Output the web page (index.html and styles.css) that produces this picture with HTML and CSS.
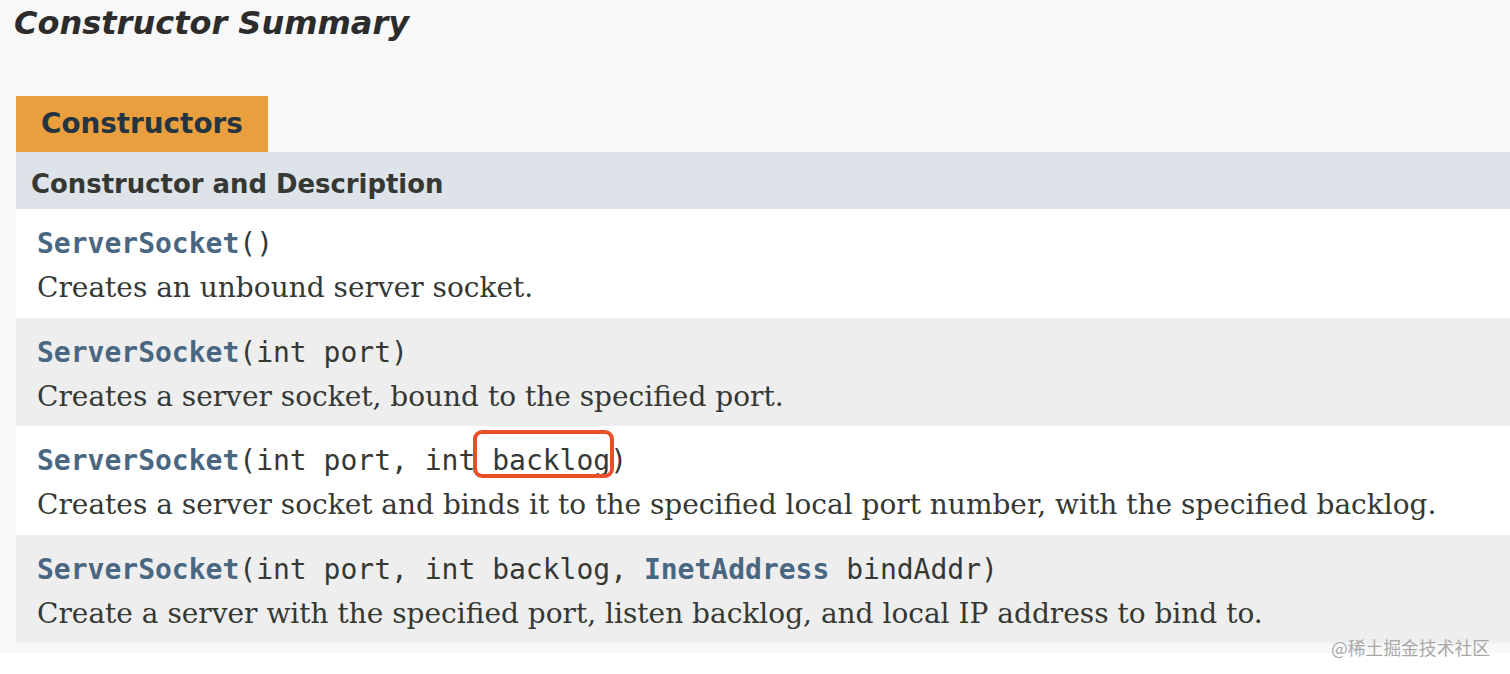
FILE: index.html
```html
<!DOCTYPE html>
<html>
<head>
<meta charset="utf-8">
<link rel="stylesheet" href="styles.css">
</head>
<body>
<div class="page">
  <h3 class="title">Constructor Summary</h3>
  <div class="summary">
    <div class="tab">Constructors</div>
    <div class="table">
      <div class="thead">Constructor and Description</div>
      <div class="row alt-white">
        <div class="code"><span class="name">ServerSocket</span>()</div>
        <div class="desc">Creates an unbound server socket.</div>
      </div>
      <div class="row alt-gray">
        <div class="code"><span class="name">ServerSocket</span>(int&nbsp;port)</div>
        <div class="desc">Creates a server socket, bound to the specified port.</div>
      </div>
      <div class="row alt-white">
        <div class="code"><span class="name">ServerSocket</span>(int&nbsp;port, int&nbsp;<span class="mark">backlog</span>)</div>
        <div class="desc">Creates a server socket and binds it to the specified local port number, with the specified backlog.</div>
      </div>
      <div class="row alt-gray">
        <div class="code"><span class="name">ServerSocket</span>(int&nbsp;port, int&nbsp;backlog, <span class="name">InetAddress</span>&nbsp;bindAddr)</div>
        <div class="desc">Create a server with the specified port, listen backlog, and local IP address to bind to.</div>
      </div>
    </div>
  </div>
  <div class="gap"></div>
  <div class="footer"></div>
  <div class="watermark">@稀土掘金技术社区</div>
</div>
</body>
</html>
```
FILE: styles.css
```css
html, body {
  margin: 0;
  padding: 0;
}
body {
  background: #f8f8f8;
  color: #353833;
  font-family: "DejaVu Sans", sans-serif;
  overflow: hidden;
}
.page {
  position: relative;
  height: 674px;
}
.title {
  margin: 0;
  padding: 0 0 0 14px;
  height: 46px;
  line-height: 46px;
  font-size: 32px;
  font-weight: bold;
  font-style: italic;
  color: #2c2c2c;
}
.summary {
  margin: 50px 0 0 16px;
}
.tab {
  width: 227px;
  height: 56px;
  padding-left: 25px;
  line-height: 56px;
  background: #ea9f3f;
  font-size: 27.8px;
  font-weight: bold;
  color: #253441;
}
.thead {
  height: 57px;
  line-height: 64px;
  padding-left: 15px;
  background: #dee3e9;
  font-size: 25.9px;
  font-weight: bold;
  color: #353833;
}
.row {
  height: 108.5px;
  box-sizing: border-box;
  padding: 15px 0 0 21px;
}
.alt-white { background: #ffffff; }
.alt-gray { background: #eeeeef; }
.code {
  font-family: "DejaVu Sans Mono", monospace;
  font-size: 28px;
  line-height: 40px;
  color: #353833;
  white-space: nowrap;
}
.name {
  font-weight: bold;
  color: #4a6782;
}
.mark {
  position: relative;
}
.mark::after {
  content: "";
  position: absolute;
  left: -19px;
  top: -14px;
  width: 141px;
  height: 48px;
  box-sizing: border-box;
  border: 4.5px solid #e8502a;
  border-radius: 9px;
}
.desc {
  font-family: "DejaVu Serif", serif;
  font-size: 28px;
  line-height: 48px;
  color: #353833;
  white-space: nowrap;
}
.gap {
  height: 10px;
}
.footer {
  background: #ffffff;
  height: 40px;
}
.watermark {
  position: absolute;
  right: 20px;
  top: 634px;
  font-family: "Noto Sans CJK SC", sans-serif;
  font-size: 17.8px;
  color: #a8a8a8;
}
```
